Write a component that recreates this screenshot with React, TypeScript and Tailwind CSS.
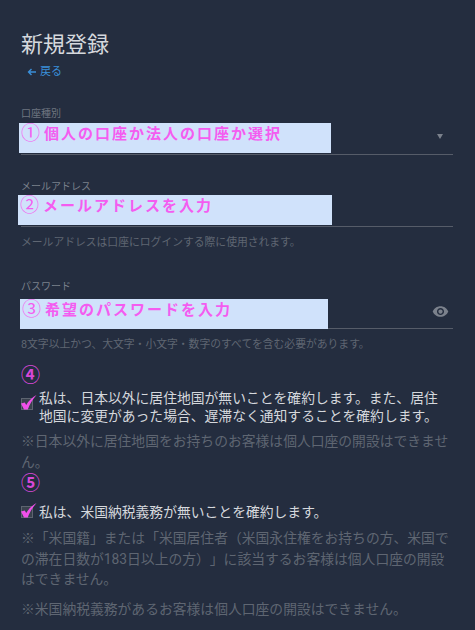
const CJK = "font-['Roboto','Noto_Sans_CJK_JP',sans-serif]";

function Note({ n, w, children, className = "" }: { n: string; w: string; children: string; className?: string }) {
  return (
    <div className={`absolute left-0 top-0 h-[30px] bg-[#d0e2fb] ${w} ${className}`}>
      <div className="flex items-center gap-[4px] pl-[2px] h-[22px] whitespace-nowrap text-[#f45cf0] font-bold">
        <span className="text-[19px] leading-[20px] font-normal">{n}</span>
        <span className="text-[15px] leading-[20px] tracking-[2px]">{children}</span>
      </div>
    </div>
  );
}

function Check({ className = "" }: { className?: string }) {
  return (
    <span className={`relative block w-[12px] h-[12px] shrink-0 border border-[#5d6470] bg-[#3a414e] ${className}`}>
      <svg viewBox="0 0 16 16" className="absolute left-[-1px] top-[-4px] w-[16px] h-[16px] overflow-visible">
        <path d="M0 8.5 L3.8 7.5 L5.2 10 C7.5 6 11 2.5 15.5 0 C11.5 4.5 8.5 9.5 6.8 14.5 L3 14.5 Z" fill="#f050ea" />
      </svg>
    </span>
  );
}

function Marker({ children, className = "" }: { children: string; className?: string }) {
  return <div className={`text-[19px] leading-[20px] font-bold text-[#d848d8] ${className}`}>{children}</div>;
}

export default function App() {
  return (
    <div className={`w-[475px] h-[630px] overflow-hidden bg-[#242d3f] pl-[21px] pr-[22px] [text-spacing-trim:space-all] ${CJK}`}>
      <h1 className="pt-[30px] text-[22px] leading-[29px] font-normal text-[#d5d8dd]">新規登録</h1>
      <div className="mt-[6px] ml-[6px] flex items-center gap-[3px] text-[11px] leading-[14px] text-[#3a8fd9]">
        <svg viewBox="0 0 10 10" className="w-[10px] h-[10px]">
          <path d="M9 5H1.5M4.5 2 1.5 5l3 3" fill="none" stroke="currentColor" strokeWidth="1.4" />
        </svg>
        <span>戻る</span>
      </div>

      <div className="mt-[28px] text-[10px] leading-[14px] text-[#6f7580]">口座種別</div>
      <div className="relative mt-[2px] h-[32px] border-b border-[#565c69]">
        <Note n="①" w="w-[312px]" className="-ml-[2px]">個人の口座か法人の口座か選択</Note>
        <span className="absolute right-[10px] top-[11px] w-0 h-0 border-x-[3px] border-x-transparent border-t-[5px] border-t-[#7b818c]" />
      </div>

      <div className="mt-[25px] text-[10px] leading-[14px] text-[#7b818c]">メールアドレス</div>
      <div className="relative mt-[1px] h-[32px] border-b border-[#565c69]">
        <Note n="②" w="w-[314px]" className="-ml-[3px]">メールアドレスを入力</Note>
      </div>
      <p className="mt-[8px] text-[10.8px] leading-[16px] text-[#5f6672]">メールアドレスは口座にログインする際に使用されます。</p>

      <div className="mt-[29px] text-[10px] leading-[14px] text-[#7b818c]">パスワード</div>
      <div className="relative mt-[5px] h-[30px] border-b border-[#565c69]">
        <Note n="③" w="w-[308px]" className="-ml-[1px]">希望のパスワードを入力</Note>
        <svg viewBox="0 0 24 24" className="absolute right-[4px] top-[4px] w-[17px] h-[17px]" fill="#7b818c">
          <path d="M12 4.5C7 4.5 2.73 7.61 1 12c1.73 4.39 6 7.5 11 7.5s9.27-3.11 11-7.5c-1.73-4.39-6-7.5-11-7.5zM12 17c-2.76 0-5-2.24-5-5s2.24-5 5-5 5 2.24 5 5-2.24 5-5 5zm0-8c-1.66 0-3 1.34-3 3s1.34 3 3 3 3-1.34 3-3-1.34-3-3-3z" />
        </svg>
      </div>
      <p className="mt-[8px] text-[10.8px] leading-[16px] text-[#5f6672]">8文字以上かつ、大文字・小文字・数字のすべてを含む必要があります。</p>

      <Marker className="mt-[13px]">④</Marker>
      <div className="mt-[3px] flex gap-[6px] pr-[4px]">
        <Check className="mt-[9px]" />
        <p className="text-[13.8px] leading-[18px] text-[#d5d8dd]">
          私は、日本以外に居住地国が無いことを確約します。また、居住地国に変更があった場合、遅滞なく通知することを確約します。
        </p>
      </div>
      <p className="mt-[6px] text-[13.8px] leading-[20.5px] text-[#5f6672]">
        ※日本以外に居住地国をお持ちのお客様は個人口座の開設はできません。
      </p>
      <Marker className="mt-[2px]">⑤</Marker>
      <div className="mt-[9px] flex items-center gap-[6px]">
        <Check />
        <p className="text-[13.8px] leading-[18px] text-[#d5d8dd]">私は、米国納税義務が無いことを確約します。</p>
      </div>
      <p className="mt-[7px] text-[13.8px] leading-[20.5px] text-[#5f6672]">
        ※「米国籍」または「米国居住者（米国永住権をお持ちの方、米国での滞在日数が183日以上の方）」に該当するお客様は個人口座の開設はできません。
      </p>
      <p className="mt-[9px] text-[13.8px] leading-[20px] text-[#5f6672]">※米国納税義務があるお客様は個人口座の開設はできません。</p>
    </div>
  );
}
